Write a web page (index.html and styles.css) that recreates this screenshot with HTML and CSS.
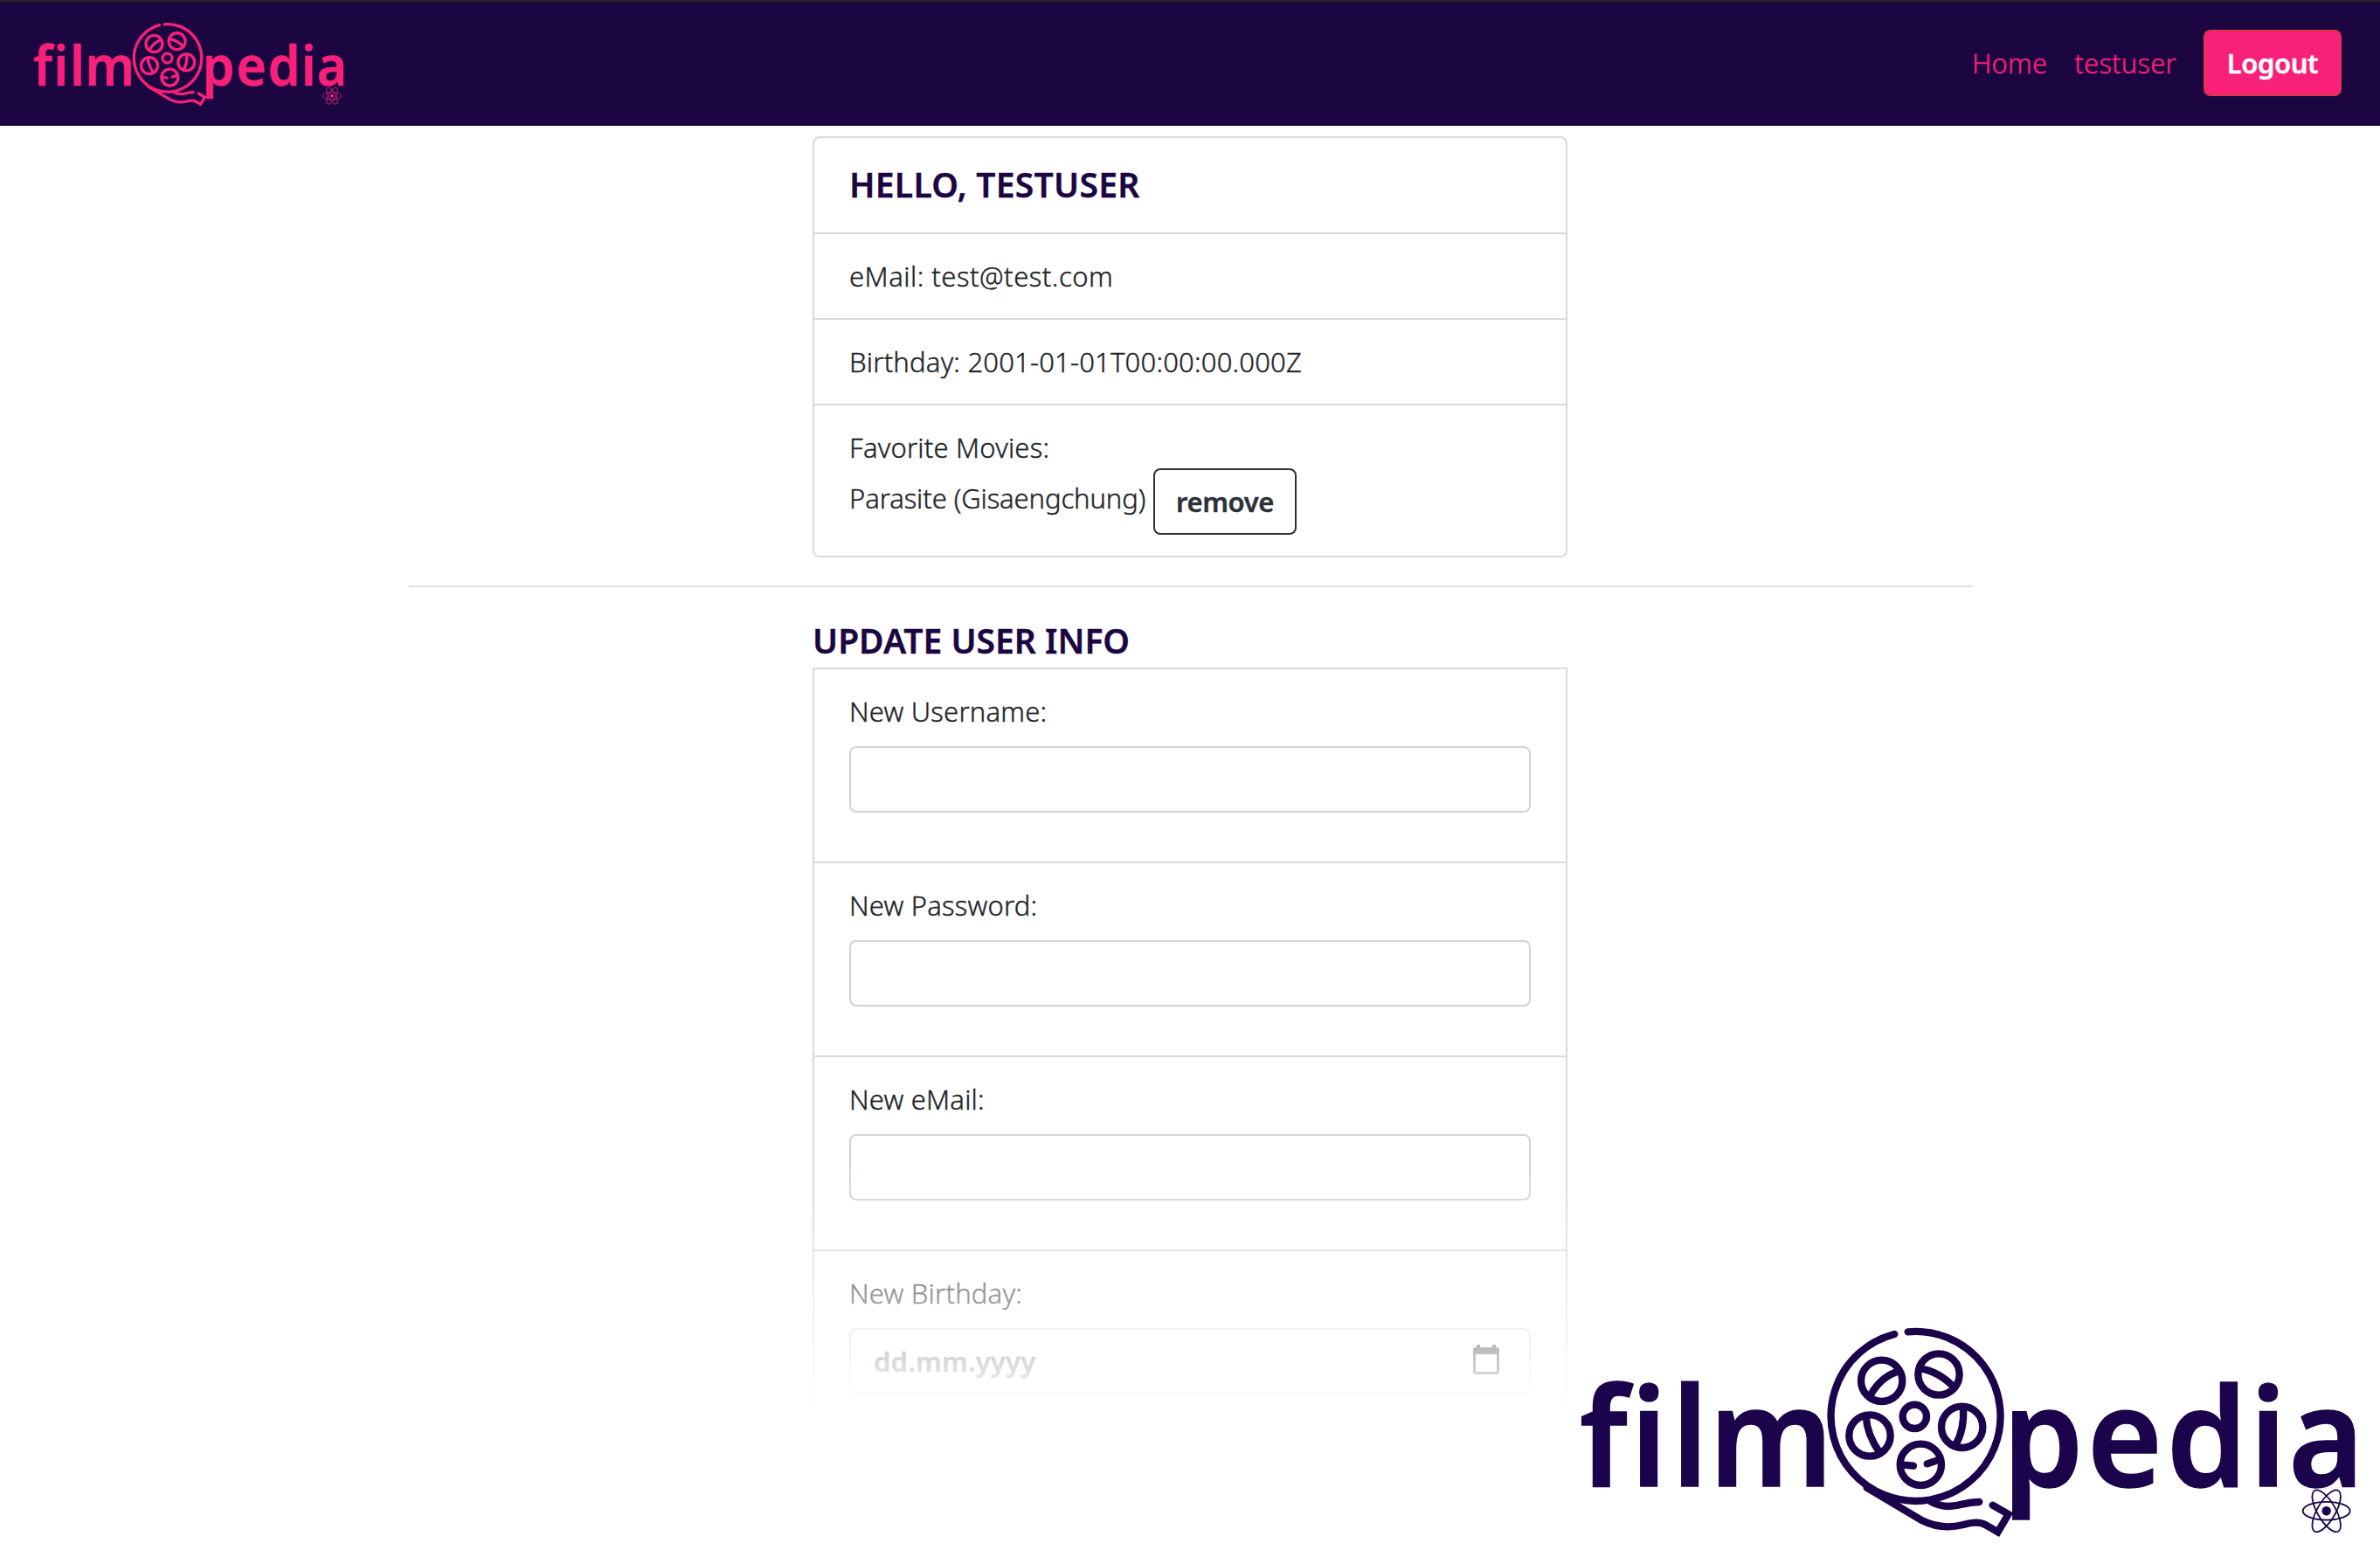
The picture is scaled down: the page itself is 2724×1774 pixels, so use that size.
FILE: index.html
```
<!DOCTYPE html>
<html lang="en">
<head>
<meta charset="utf-8">
<title>filmopedia</title>
<link rel="stylesheet" href="styles.css">
</head>
<body>
<svg class="defs" aria-hidden="true">
  <symbol id="reel" viewBox="0 0 900 810" overflow="visible">
    <g fill="none" stroke="currentColor" stroke-width="25" stroke-linecap="round">
      <path d="M431 73A291 291 0 1 1 385 81"/>
      <circle cx="454" cy="364" r="41"/>
      <circle cx="341" cy="241" r="71"/>
      <circle cx="537" cy="219" r="71"/>
      <circle cx="617" cy="400" r="71"/>
      <circle cx="475" cy="529" r="71"/>
      <circle cx="300" cy="429" r="71"/>
      <path d="M302 291Q338 227 400 208M475 199Q538 209 591 265M621 332Q626 408 594 462M287 362Q290 427 336 490M408 529L450 533M497 526L541 511"/>
      <path stroke-linejoin="miter" d="M290 608L480 721Q545 754 622 735Q672 720 700 737L740 760L776 699L722 668"/>
      <path d="M510 656Q558 683 622 664Q646 658 676 657"/>
    </g>
  </symbol>
  <symbol id="atom" viewBox="-28 -28 56 56" overflow="visible">
    <g fill="none" stroke="currentColor" stroke-width="1.8">
      <ellipse rx="27" ry="10.4"/>
      <ellipse rx="27" ry="10.4" transform="rotate(60)"/>
      <ellipse rx="27" ry="10.4" transform="rotate(120)"/>
    </g>
    <circle r="5.2" fill="currentColor"/>
  </symbol>
</svg>

<header class="navbar">
  <svg class="logo logo-nav" viewBox="0 0 924 254">
    <text transform="scale(.94 1)" x="8.5 70.4 120.4 166.2" y="190.7">film</text>
    <use href="#reel" x="240" y="-10" width="300" height="270"/>
    <text transform="scale(.94 1)" x="523.6 626.3 723 824.4 871.5" y="190.7">pedia</text>
    <use href="#atom" x="834.7" y="191.3" width="56" height="56"/>
  </svg>
  <nav class="nav-links">
    <a class="nav-link">Home</a>
    <a class="nav-link">testuser</a>
    <button class="btn btn-logout">Logout</button>
  </nav>
</header>

<main class="container">
  <section class="column">
    <div class="card rounded">
      <div class="row"><h1 class="title hello">HELLO, TESTUSER</h1></div>
      <div class="row"><span class="email">eMail: test@test.com</span></div>
      <div class="row"><span class="birthday">Birthday: 2001-01-01T00:00:00.000Z</span></div>
      <div class="row">
        <div>Favorite Movies:</div>
        <div class="movie"><span class="movie-name">Parasite (Gisaengchung)</span><button class="btn btn-remove">remove</button></div>
      </div>
    </div>
  </section>
  <hr class="divider">
  <section class="column">
    <h2 class="title">UPDATE USER INFO</h2>
    <form class="card form">
      <div class="row"><label class="label">New Username:</label><div class="field"></div></div>
      <div class="row"><label class="label">New Password:</label><div class="field"></div></div>
      <div class="row"><label class="label">New eMail:</label><div class="field"></div></div>
      <div class="row"><label class="label">New Birthday:</label>
        <div class="field date"><span>dd.mm.yyyy</span>
          <svg class="calendar" viewBox="0 0 30 34"><path fill-rule="evenodd" d="M4 0h4v3h14V0h4v3h1a3 3 0 0 1 3 3v25a3 3 0 0 1-3 3H3a3 3 0 0 1-3-3V6a3 3 0 0 1 3-3h1zM3 11v20h24V11z"/></svg>
        </div>
      </div>
    </form>
  </section>
</main>

<svg class="logo logo-corner" viewBox="0 0 924 254">
  <text transform="scale(.94 1)" x="8.5 70.4 120.4 166.2" y="190.7">film</text>
  <use href="#reel" x="240" y="-10" width="300" height="270"/>
  <text transform="scale(.94 1)" x="523.6 626.3 723 824.4 871.5" y="190.7">pedia</text>
  <use href="#atom" x="834.7" y="191.3" width="56" height="56"/>
</svg>
</body>
</html>
```
FILE: styles.css
```
* { box-sizing: border-box; }
body {
  margin: 0;
  height: 1774px;
  overflow: hidden;
  position: relative;
  border-top: 2px solid #262626;
  background: #fff;
  color: #212529;
  font: 300 31px/48px "Noto Sans", "Open Sans", sans-serif;
  letter-spacing: .2px;
  -webkit-text-stroke: .4px;
}
.defs { position: absolute; width: 0; height: 0; }

/* navigation */
.navbar {
  height: 142px;
  padding: 20.4px 44px 0 34.8px;
  display: flex;
  justify-content: space-between;
  align-items: flex-start;
  background: #1b0642;
  color: #f92079;
}
.nav-links { display: flex; align-items: center; margin-top: 11.6px; }
.nav-link { margin-right: 31px; }
.logo { overflow: visible; }
.logo text {
  font: 600 157px "Noto Sans", "Open Sans", sans-serif;
  letter-spacing: 0;
  fill: currentColor;
  stroke: currentColor;
  stroke-width: 1.5px;
  -webkit-text-stroke: 0;
}
.logo-nav { width: 369.6px; height: 101.6px; }
.logo-corner { position: absolute; left: 1800px; top: 1508px; width: 924px; height: 254px; color: #1b044b; }

.btn {
  height: 76px;
  padding: 12px 0;
  border: 2px solid;
  border-radius: 8px;
  background: none;
  font: 600 31px/48px "Noto Sans", "Open Sans", sans-serif;
  text-align: center;
}
.btn-logout { width: 158px; background: #f92079; border-color: #dc3545; color: #fff; letter-spacing: -.4px; }
.btn-remove { width: 164px; color: #2c3138; border-color: #2c3138; letter-spacing: -.4px; }

/* page */
.container { display: flex; flex-direction: column; align-items: center; padding-top: 12px; }
.column { width: 864px; }
.divider { width: 1790px; height: 2px; margin: 32px 0 32px 2px; border: 0; background: #e0e0e0; }
.title {
  margin: 0 0 3px;
  color: #1b0642;
  font-size: 39px;
  font-weight: 600;
  line-height: 57px;
  letter-spacing: 0;
}
.hello { letter-spacing: .3px; }
.card { border: 2px solid #d9d9d9; position: relative; }
.rounded { border-radius: 8px; }
.row { padding: 24px 40px; }
.row + .row { border-top: 2px solid #d9d9d9; }
.email { letter-spacing: .5px; }
.movie { display: flex; }
.movie-name { width: 348px; padding-top: 10px; letter-spacing: -.1px; }
.label { display: block; margin-bottom: 16px; }
.field {
  height: 76px;
  margin-bottom: 32px;
  padding: 12px 34px 12px 26px;
  border: 2px solid #ced4da;
  border-radius: 8px;
}
.date { display: flex; justify-content: space-between; color: #495057; font-weight: 600; }
.calendar { width: 30px; height: 34px; margin-top: 5px; fill: #000; }

/* fades the form out towards the bottom of the page */
.form::after {
  content: "";
  position: absolute;
  inset: 564px -2px -2px;
  background: linear-gradient(rgba(255,255,255,0), #fff 290px);
}
```
